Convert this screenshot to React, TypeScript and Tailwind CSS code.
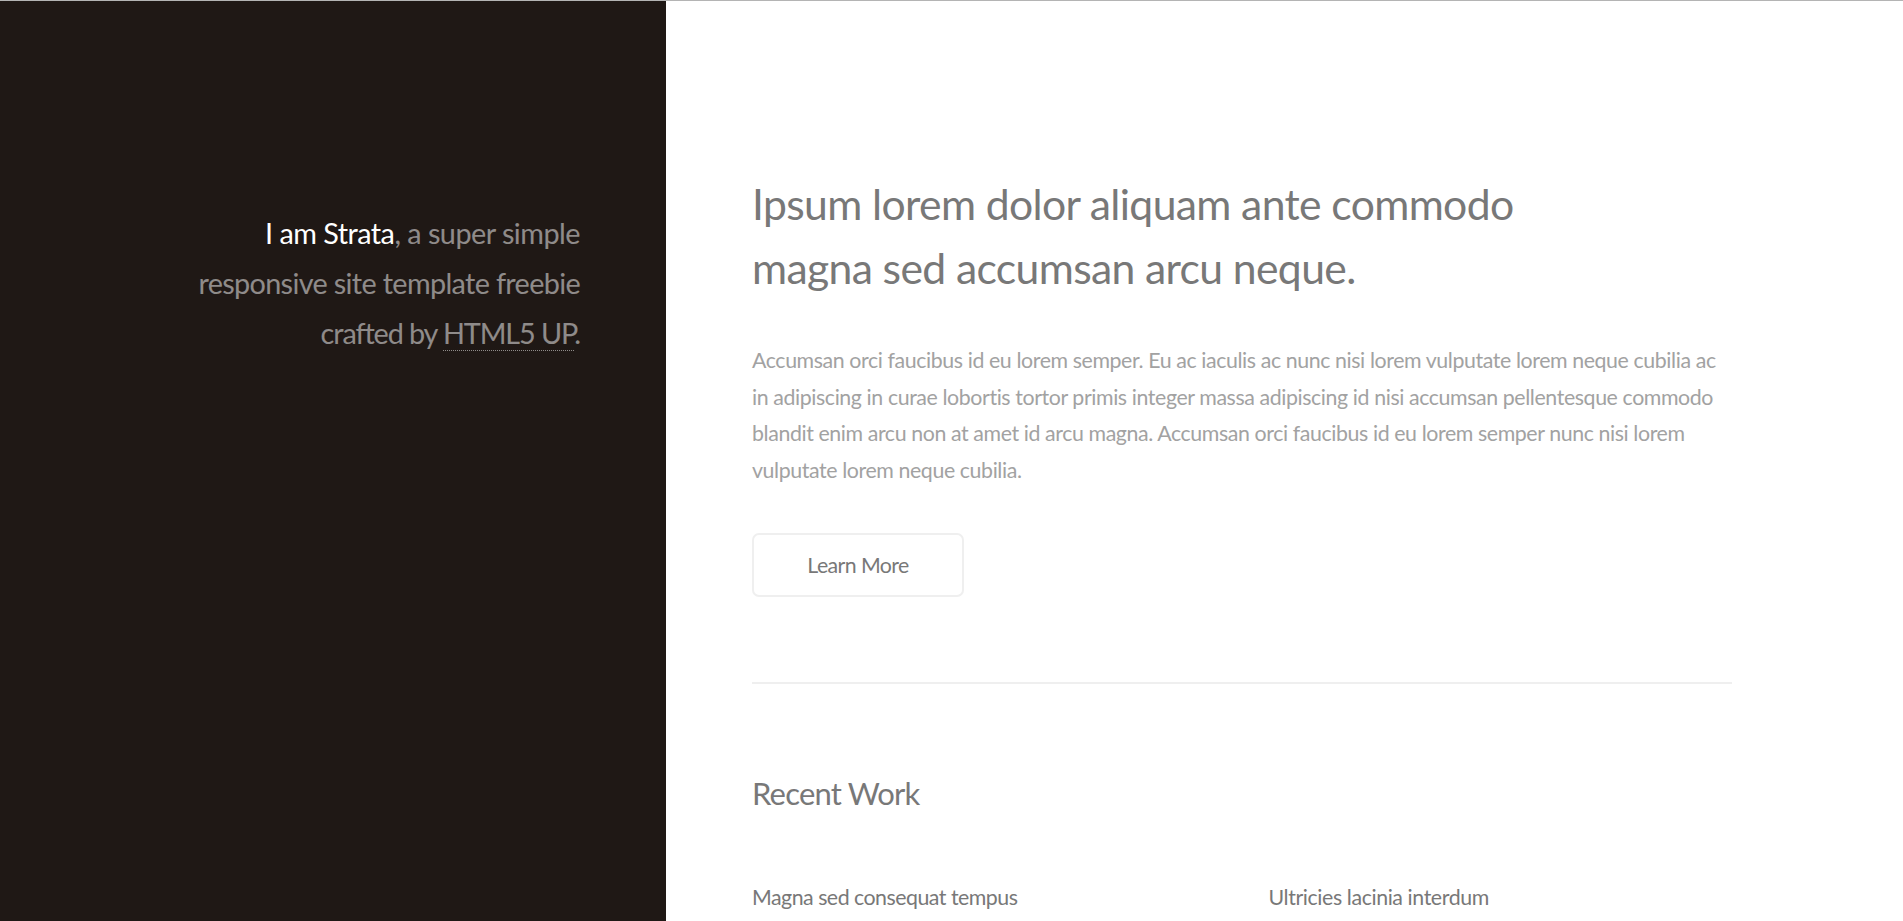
import React from "react";

const font = { fontFamily: "Lato, 'Open Sans', sans-serif" };

export default function App() {
  return (
    <div className="h-[921px] overflow-hidden bg-white" style={font}>
      <div className="h-px bg-[#b4b4b4]" />
      <div className="flex h-[920px]">
        <header className="w-[666px] shrink-0 bg-[#1f1815] pl-[60px] pr-[86px] pt-[207px] text-right">
          <h1 className="text-[28.8px] leading-[50px] text-[rgba(255,255,255,0.5)] font-normal whitespace-nowrap">
            <span className="tracking-[-0.52px]">
              <span className="text-white">I am Strata</span>, a super simple
            </span>
            <br />
            <span className="tracking-[-0.65px]">responsive site template freebie</span>
            <br />
            <span className="tracking-[-1.1px]">
              crafted by{" "}
              <a className="text-[rgba(255,255,255,0.5)] border-b border-dotted border-[rgba(255,255,255,0.5)]">
                HTML5 UP
              </a>
              .
            </span>
          </h1>
        </header>
        <main className="w-[1152px] px-[86px] pt-[171px] text-[21.33px] leading-[36.5px] text-[#a2a2a2]">
          <section className="pb-[85px]">
            <h2 className="text-[42.67px] leading-[63.5px] tracking-[-0.63px] text-[#787878] font-normal mb-[43px] whitespace-nowrap">
              Ipsum lorem dolor aliquam ante commodo
              <br />
              magna sed accumsan arcu neque.
            </h2>
            <p className="mb-[45px] tracking-[-0.4px] whitespace-nowrap">
              Accumsan orci faucibus id eu lorem semper. Eu ac iaculis ac nunc nisi lorem vulputate lorem neque cubilia ac
              <br />
              in adipiscing in curae lobortis tortor primis integer massa adipiscing id nisi accumsan pellentesque commodo
              <br />
              blandit enim arcu non at amet id arcu magna. Accumsan orci faucibus id eu lorem semper nunc nisi lorem
              <br />
              vulputate lorem neque cubilia.
            </p>
            <a className="inline-flex h-[64px] min-w-[212px] items-center justify-center rounded-[7px] px-[32px] tracking-[-0.6px] text-[#787878] shadow-[inset_0_0_0_2px_#efefef]">
              Learn More
            </a>
          </section>
          <section className="border-t-2 border-[#efefef] pt-[85px]">
            <h2 className="text-[31px] leading-[48px] tracking-[-0.8px] text-[#787878] font-normal mb-[64px]">Recent Work</h2>
            <div className="grid grid-cols-2 gap-x-[53px]">
              <article>
                <h3 className="text-[21.33px] leading-[32px] tracking-[-0.5px] text-[#787878] font-normal">Magna sed consequat tempus</h3>
              </article>
              <article>
                <h3 className="text-[21.33px] leading-[32px] tracking-[-0.4px] text-[#787878] font-normal">Ultricies lacinia interdum</h3>
              </article>
            </div>
          </section>
        </main>
      </div>
    </div>
  );
}
